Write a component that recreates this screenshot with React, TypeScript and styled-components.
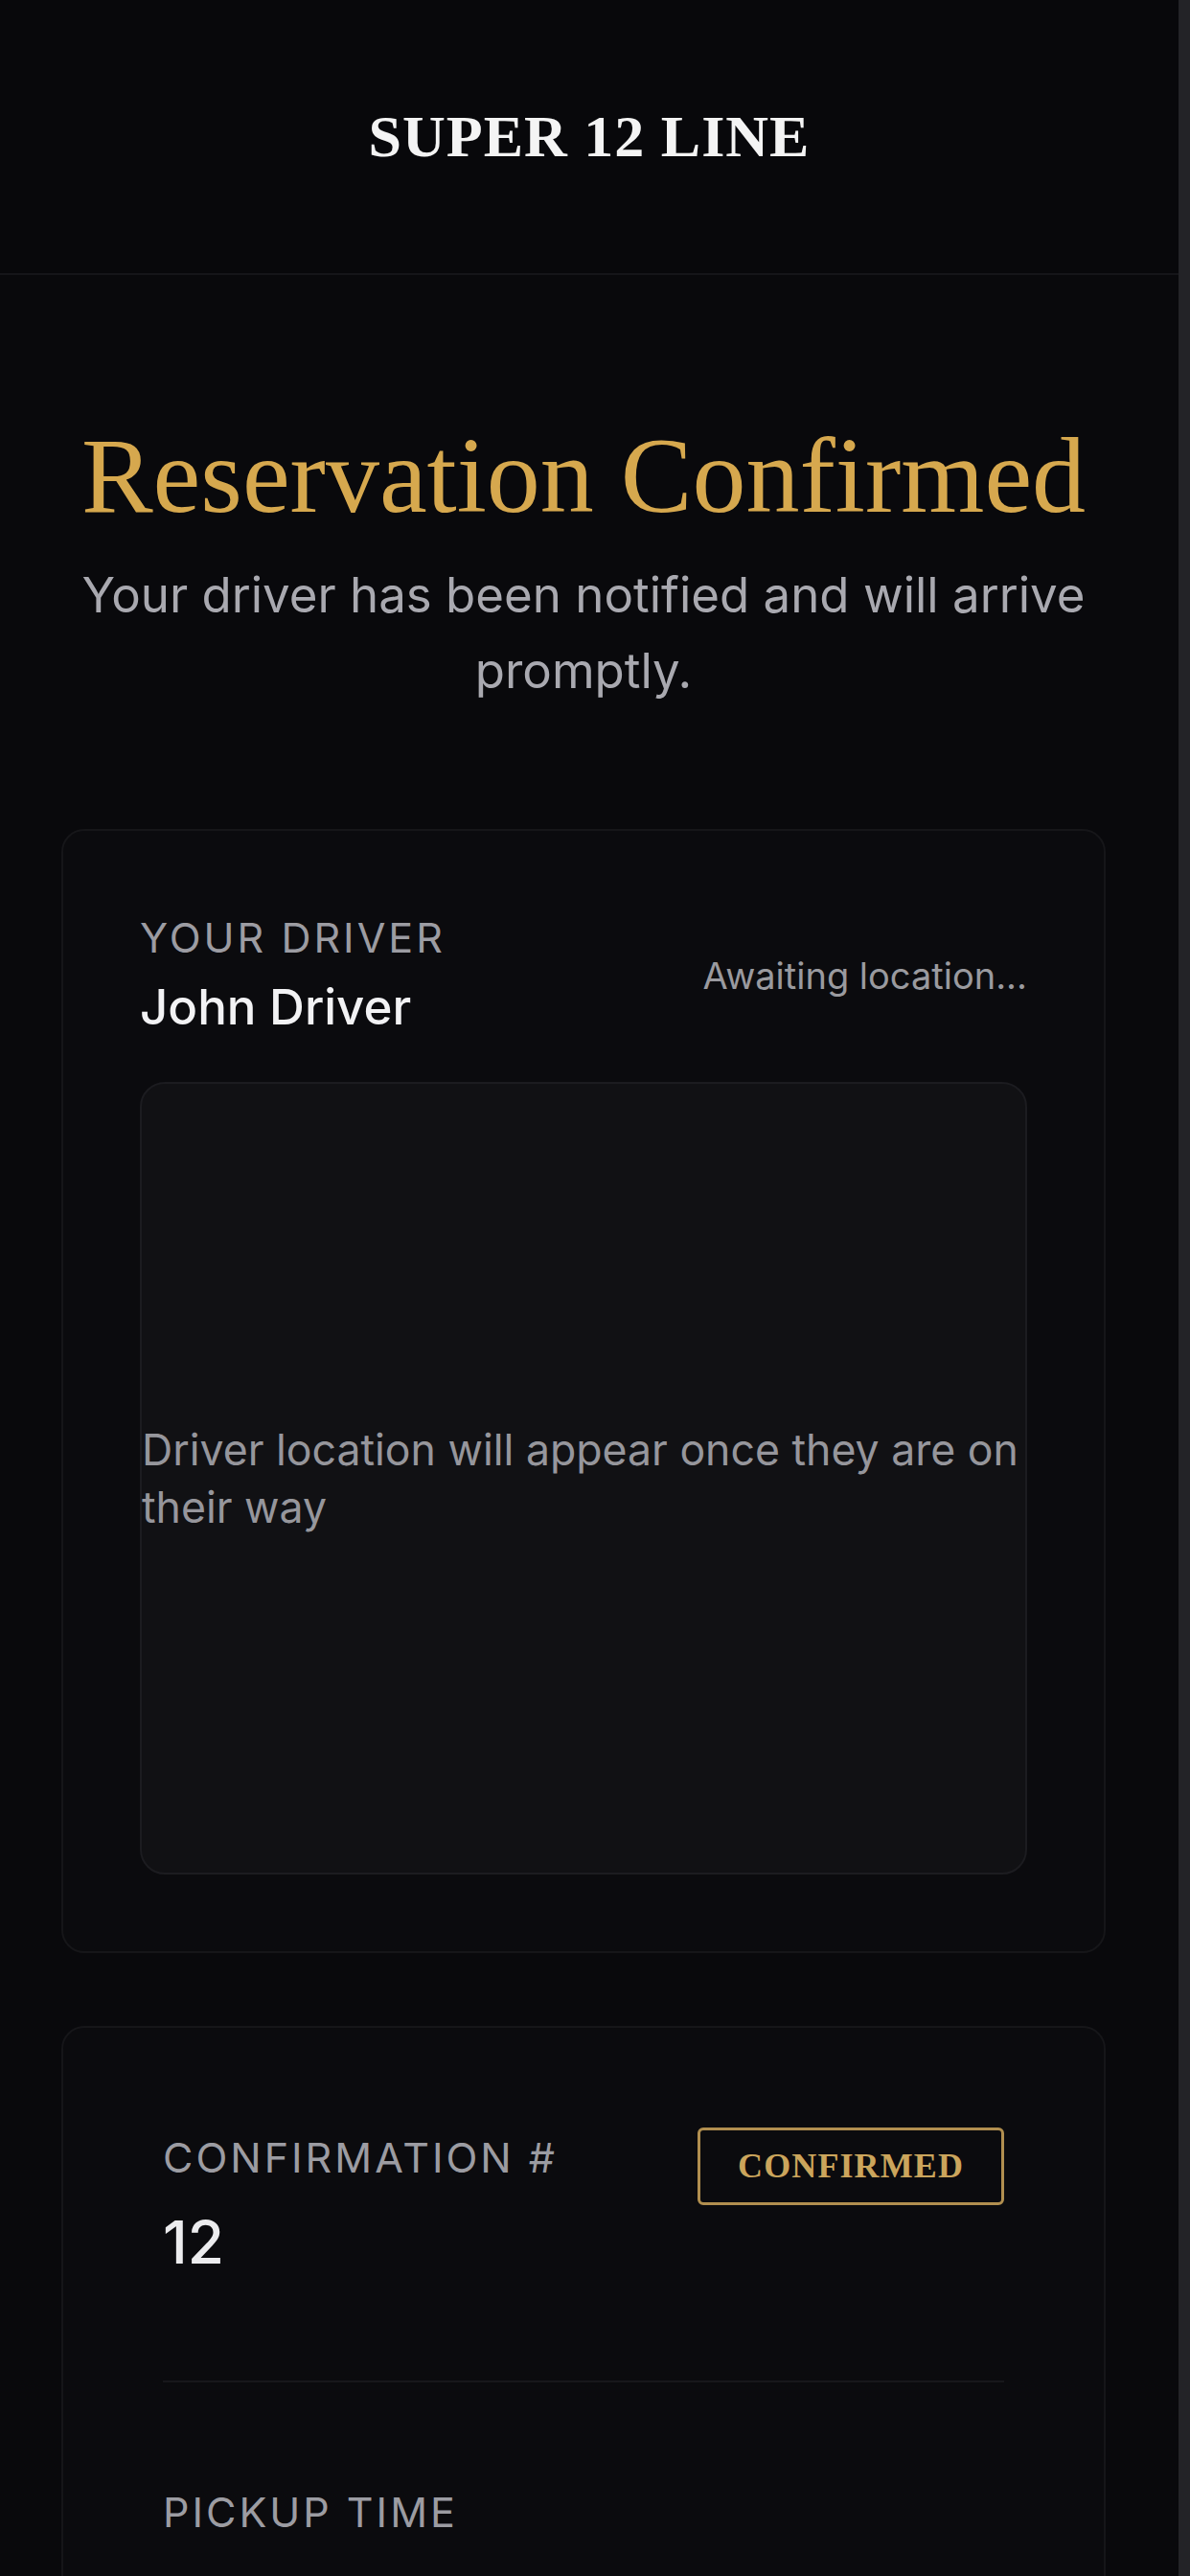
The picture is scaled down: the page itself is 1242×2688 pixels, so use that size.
import React from "react";
import styled, { createGlobalStyle } from "styled-components";

const GlobalStyle = createGlobalStyle`
  html, body {
    margin: 0;
    padding: 0;
    background: #09090c;
    overflow: hidden;
  }
  * { box-sizing: border-box; }
`;

const Shell = styled.div`
  display: flex;
  width: 1242px;
  height: 2688px;
  overflow: hidden;
  background: #09090c;
`;

const Page = styled.div`
  flex: 1;
  display: flex;
  flex-direction: column;
  min-width: 0;
  & > * { flex-shrink: 0; }
`;

const ScrollTrack = styled.div`
  width: 12px;
  flex-shrink: 0;
  background: #232327;
`;

const Header = styled.header`
  height: 287px;
  display: flex;
  align-items: center;
  justify-content: center;
  border-bottom: 2px solid #151519;
  background: #08080b;
`;

const Brand = styled.h1`
  margin: 0;
  font-family: "Liberation Serif", "Times New Roman", serif;
  font-weight: 700;
  font-size: 62px;
  letter-spacing: 1px;
  color: #f4f4f4;
`;

const Main = styled.main`
  display: flex;
  flex-direction: column;
  padding: 0 76px 0 64px;
  & > * { flex-shrink: 0; }
`;

const Hero = styled.section`
  display: flex;
  flex-direction: column;
  align-items: center;
  padding-top: 142px;
  text-align: center;
`;

const Title = styled.h2`
  margin: 0;
  font-family: "Liberation Serif", "Times New Roman", serif;
  font-weight: 400;
  font-size: 112px;
  line-height: 134px;
  color: #d6a84e;
`;

const Subtitle = styled.p`
  margin: 18px 0 0;
  max-width: 1100px;
  font-family: Inter, "Noto Sans", sans-serif;
  font-size: 51px;
  line-height: 79px;
  color: #a9a9b0;
`;

const Card = styled.section<{ $pad: number; $gap: number }>`
  margin-top: ${(p) => p.$gap}px;
  background: #0b0b0e;
  border: 2px solid #161619;
  border-radius: 24px;
  padding: ${(p) => p.$pad}px;
  display: flex;
  flex-direction: column;
`;

const Row = styled.div`
  display: flex;
  justify-content: space-between;
  align-items: center;
`;

const Stack = styled.div`
  display: flex;
  flex-direction: column;
`;

const Label = styled.div`
  font-family: Inter, "Noto Sans", sans-serif;
  font-size: 43px;
  line-height: 62px;
  letter-spacing: 3px;
  text-transform: uppercase;
  color: #9c9ca2;
`;

const DriverName = styled.div`
  margin-top: 4px;
  font-family: Inter, "Noto Sans", sans-serif;
  font-weight: 500;
  font-size: 51px;
  line-height: 76px;
  color: #f2f2f4;
`;

const Status = styled.div`
  font-family: Inter, "Noto Sans", sans-serif;
  font-size: 38px;
  line-height: 50px;
  color: #9a9a9f;
`;

const MapBox = styled.div`
  margin-top: 40px;
  height: 827px;
  background: #111114;
  border: 2px solid #1c1c20;
  border-radius: 26px;
  display: flex;
  align-items: center;
`;

const MapNote = styled.p`
  margin: 0;
  width: 930px;
  font-family: Inter, "Noto Sans", sans-serif;
  font-size: 44.6px;
  line-height: 60px;
  color: #96969c;
`;

const DetailRow = styled.div<{ $divider?: boolean; $first?: boolean }>`
  display: flex;
  justify-content: space-between;
  align-items: flex-start;
  padding-top: ${(p) => (p.$first ? 0 : 104)}px;
  padding-bottom: 104px;
  border-bottom: ${(p) => (p.$divider ? "2px solid #17171b" : "none")};
`;

const Value = styled.div`
  margin-top: 18px;
  font-family: Inter, "Noto Sans", sans-serif;
  font-weight: 500;
  font-size: 62px;
  line-height: 80px;
  color: #ececee;
`;

const Badge = styled.span`
  display: inline-block;
  padding: 16px 39px;
  border: 3px solid #b18f4f;
  border-radius: 6px;
  font-family: "Liberation Serif", "Times New Roman", serif;
  font-weight: 700;
  font-size: 36px;
  line-height: 43px;
  letter-spacing: 1.1px;
  color: #cba55c;
`;

export default function App() {
  return (
    <>
      <GlobalStyle />
      <Shell>
        <Page>
          <Header>
            <Brand>SUPER 12 LINE</Brand>
          </Header>
          <Main>
            <Hero>
              <Title>Reservation Confirmed</Title>
              <Subtitle>
                Your driver has been notified and will arrive promptly.
              </Subtitle>
            </Hero>

            <Card $pad={80} $gap={126}>
              <Row>
                <Stack>
                  <Label>Your Driver</Label>
                  <DriverName>John Driver</DriverName>
                </Stack>
                <Status>Awaiting location...</Status>
              </Row>
              <MapBox>
                <MapNote>
                  Driver location will appear once they are on their way
                </MapNote>
              </MapBox>
            </Card>

            <Card $pad={104} $gap={76}>
              <DetailRow $divider $first>
                <Stack>
                  <Label>Confirmation #</Label>
                  <Value>12</Value>
                </Stack>
                <Badge>CONFIRMED</Badge>
              </DetailRow>
              <DetailRow>
                <Stack>
                  <Label>Pickup Time</Label>
                </Stack>
              </DetailRow>
            </Card>
          </Main>
        </Page>
        <ScrollTrack />
      </Shell>
    </>
  );
}
